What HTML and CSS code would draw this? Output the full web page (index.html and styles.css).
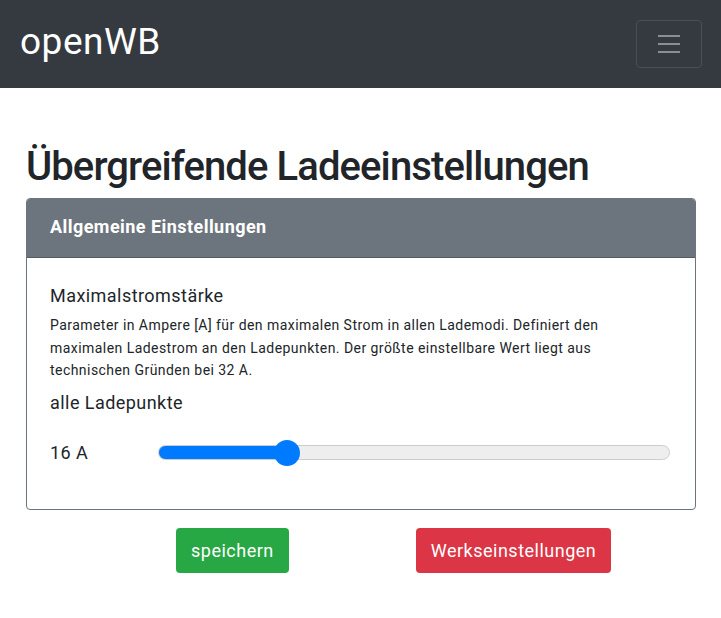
FILE: index.html
```html
<!DOCTYPE html>
<html lang="de">
<head>
    <meta charset="UTF-8">
    <meta name="viewport" content="width=device-width, initial-scale=1.0">
    <title>openWB</title>
    <link rel="stylesheet" href="styles.css">
</head>
<body>
    <nav class="navbar">
        <span class="brand">openWB</span>
        <button class="toggler" type="button" aria-label="Menü">
            <svg width="30" height="30" viewBox="0 0 30 30">
                <path d="M4 7h22M4 15h22M4 23h22" stroke="#8b8f94" stroke-width="2" stroke-linecap="butt"/>
            </svg>
        </button>
    </nav>

    <main class="container">
        <h1>Übergreifende Ladeeinstellungen</h1>

        <div class="card">
            <div class="card-header">Allgemeine Einstellungen</div>
            <div class="card-body">
                <h2 class="setting-title">Maximalstromstärke</h2>
                <p class="setting-help">Parameter in Ampere [A] für den maximalen Strom in allen Lademodi. Definiert den maximalen Ladestrom an den Ladepunkten. Der größte einstellbare Wert liegt aus technischen Gründen bei 32 A.</p>
                <h3 class="setting-label">alle Ladepunkte</h3>
                <div class="slider-row">
                    <span class="slider-value">16 A</span>
                    <input class="slider" type="range" min="6" max="48" value="16" style="--fill: 25%">
                </div>
            </div>
        </div>

        <div class="actions">
            <button class="btn btn-success" type="button">speichern</button>
            <button class="btn btn-danger" type="button">Werkseinstellungen</button>
        </div>
    </main>
</body>
</html>
```

FILE: styles.css
```css
body {
    margin: 0;
    font-family: Roboto, 'Liberation Sans', sans-serif;
    letter-spacing: 0.45px;
    color: #212529;
    background: #fff;
}

.navbar {
    display: flex;
    justify-content: space-between;
    align-items: center;
    height: 88px;
    padding: 0 19px 0 20px;
    box-sizing: border-box;
    background: #343a40;
}

.brand {
    color: #fff;
    font-size: 37px;
    line-height: 1;
    margin-top: -5px;
    letter-spacing: 0.5px;
}

.toggler {
    display: flex;
    align-items: center;
    justify-content: center;
    width: 66px;
    height: 48px;
    padding: 0;
    background: transparent;
    border: 1px solid #4a4f55;
    border-radius: 4px;
}

.container {
    padding: 0 25px 0 26px;
}

h1 {
    font-size: 40px;
    font-weight: 500;
    line-height: 1.2;
    letter-spacing: -0.9px;
    margin: 55px 0 7px;
}

.card {
    border: 1px solid #6c757d;
    border-radius: 4px;
    overflow: hidden;
}

.card-header {
    background: #6c757d;
    color: #fff;
    font-size: 18px;
    font-weight: 700;
    height: 58px;
    line-height: 56px;
    padding: 0 23px;
    border-bottom: 1px solid #545b62;
}

.card-body {
    padding: 25px 23px 41px;
}

.setting-title {
    font-size: 18px;
    font-weight: 400;
    margin: 0 0 6px;
    line-height: 25px;
}

.setting-help {
    font-size: 14px;
    line-height: 22.5px;
    margin: 0 0 8px;
}

.setting-label {
    font-size: 18px;
    font-weight: 400;
    line-height: 25px;
    margin: 0 0 23px;
}

.slider-row {
    display: flex;
    align-items: center;
    height: 30px;
}

.slider-value {
    font-size: 18px;
    width: 106px;
    flex-shrink: 0;
}

.slider {
    -webkit-appearance: none;
    appearance: none;
    flex: 1;
    margin: 0 2px 0 2px;
    height: 15px;
    border-radius: 8px;
    border: 1px solid #ccc;
    box-sizing: border-box;
    background: linear-gradient(to right, #007bff var(--fill), #eee var(--fill));
}

.slider::-webkit-slider-thumb {
    -webkit-appearance: none;
    width: 26px;
    height: 26px;
    border-radius: 50%;
    background: #007bff;
    border: none;
}

.actions {
    display: flex;
    gap: 127px;
    padding: 18px 0 0 150px;
}

.btn {
    font-family: inherit;
    font-size: 18px;
    letter-spacing: 0.5px;
    color: #fff;
    border: none;
    border-radius: 4px;
    height: 45px;
    padding: 0 15px;
}

.btn-success {
    background: #28a745;
}

.btn-danger {
    background: #dc3545;
}
```
